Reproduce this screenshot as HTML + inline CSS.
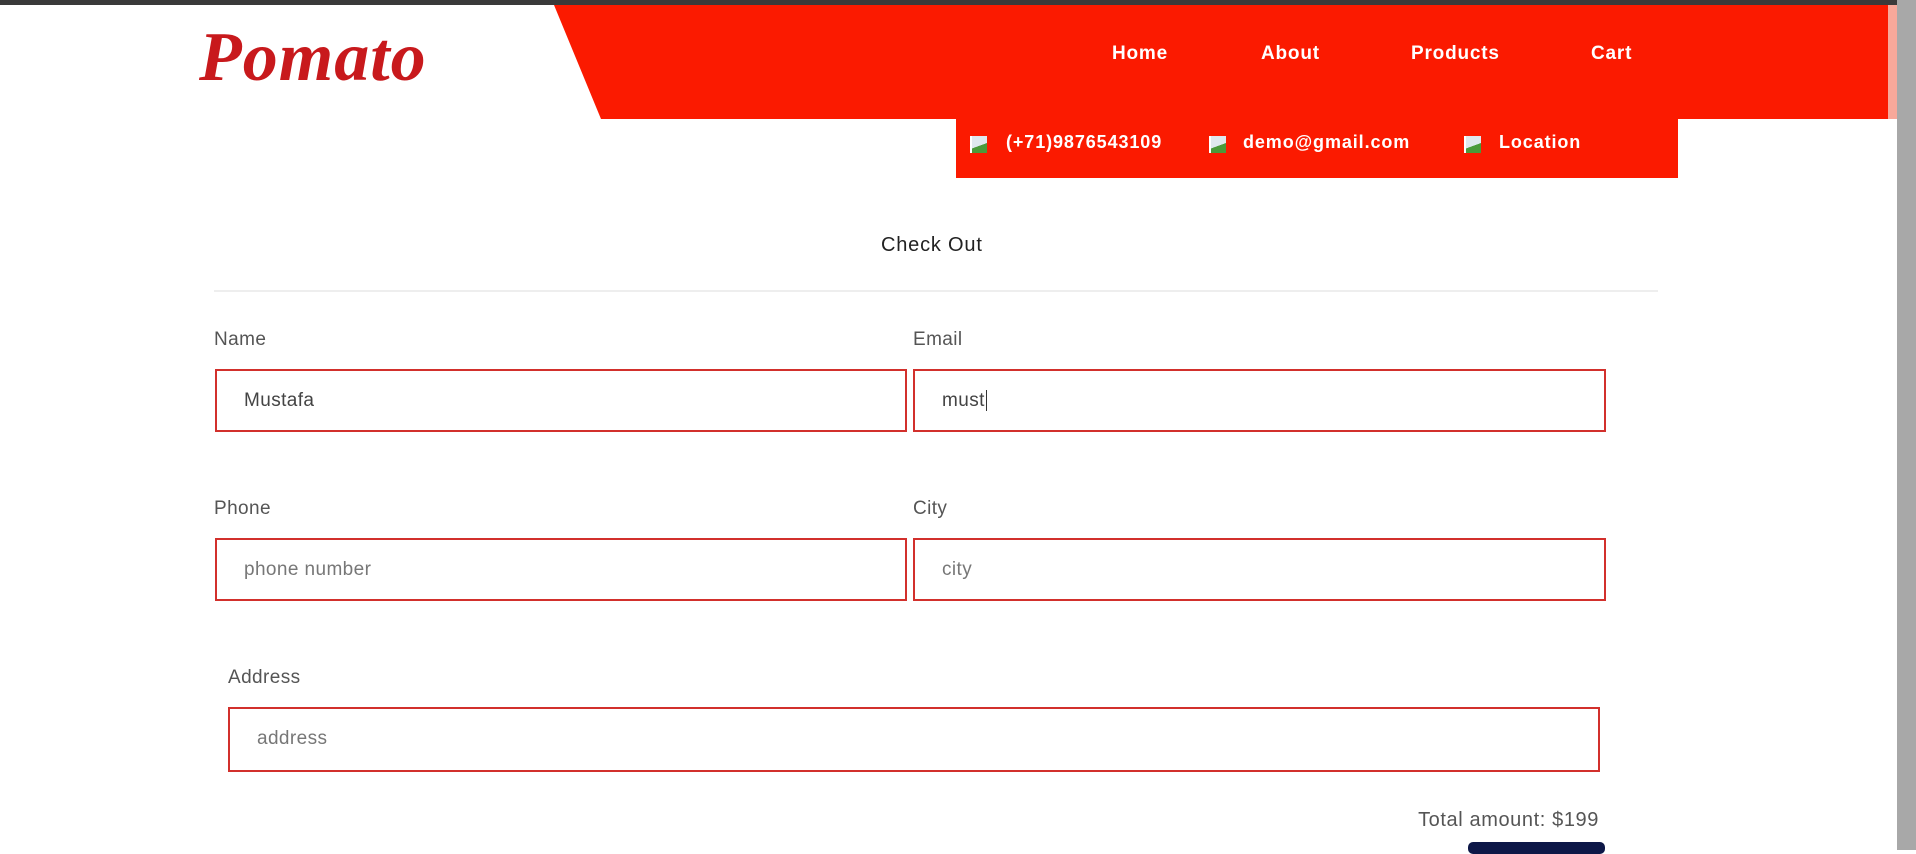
<!DOCTYPE html>
<html><head><meta charset="utf-8"><style>
*{margin:0;padding:0;box-sizing:border-box}
body{width:1916px;height:850px;overflow:hidden;background:#fff;font-family:"Liberation Sans",sans-serif;position:relative}
.a{position:absolute}
.top{left:0;top:0;width:1916px;height:5px;background:#3a3a3a}
.scroll{left:1897px;top:0;width:19px;height:850px;background:#a8a8a8}
.logo{left:199px;top:18px;font-family:"Liberation Serif",serif;font-style:italic;font-weight:bold;font-size:70px;color:#c8191c;letter-spacing:1px}
.nav{top:43px;color:#fff;font-weight:bold;font-size:19px;letter-spacing:0.8px}
.ct{top:132px;color:#fff;font-weight:bold;font-size:18px;letter-spacing:0.9px}
.ic{width:17px;height:17px;top:136px;background:linear-gradient(160deg,#dfe8ee 55%,#4a9a3a 56%);border-left:2px solid #fff}
.lbl{font-size:19px;color:#555;letter-spacing:0.4px}
.in{border:2px solid #d2302c;height:63px;font-size:19px;color:#444;padding-left:27px;line-height:59px;background:#fff;letter-spacing:0.4px}
.ph{color:#777}
</style></head><body>
<div class="a top"></div>
<svg class="a" style="left:0;top:5px" width="1900" height="175"><polygon points="554,0 1888,0 1888,114 601,114" fill="#fb1a00"/><rect x="1888" y="0" width="9" height="114" fill="#f8a89a"/><rect x="956" y="114" width="722" height="59" fill="#fb1a00"/></svg>
<div class="a scroll"></div>
<div class="a logo">Pomato</div>
<div class="a nav" style="left:1112px">Home</div>
<div class="a nav" style="left:1261px">About</div>
<div class="a nav" style="left:1411px">Products</div>
<div class="a nav" style="left:1591px">Cart</div>
<div class="a ic" style="left:970px"></div><div class="a ct" style="left:1006px">(+71)9876543109</div>
<div class="a ic" style="left:1209px"></div><div class="a ct" style="left:1243px">demo@gmail.com</div>
<div class="a ic" style="left:1464px"></div><div class="a ct" style="left:1499px">Location</div>
<div class="a" style="left:881px;top:234px;font-size:20px;color:#222;letter-spacing:0.8px">Check Out</div>
<div class="a" style="left:214px;top:290px;width:1444px;height:2px;background:#eee"></div>
<div class="a lbl" style="left:214px;top:329px">Name</div>
<div class="a lbl" style="left:913px;top:329px">Email</div>
<div class="a in" style="left:215px;top:369px;width:692px">Mustafa</div>
<div class="a in" style="left:913px;top:369px;width:693px">must<span style="border-left:1px solid #333;margin-left:1px"></span></div>
<div class="a lbl" style="left:214px;top:498px">Phone</div>
<div class="a lbl" style="left:913px;top:498px">City</div>
<div class="a in ph" style="left:215px;top:538px;width:692px">phone number</div>
<div class="a in ph" style="left:913px;top:538px;width:693px">city</div>
<div class="a lbl" style="left:228px;top:667px">Address</div>
<div class="a in ph" style="left:228px;top:707px;width:1372px;height:65px">address</div>
<div class="a" style="right:317px;top:809px;font-size:20px;color:#555;letter-spacing:0.6px">Total amount: $199</div>
<div class="a" style="left:1468px;top:842px;width:137px;height:12px;background:#0d1747;border-radius:5px"></div>
</body></html>
